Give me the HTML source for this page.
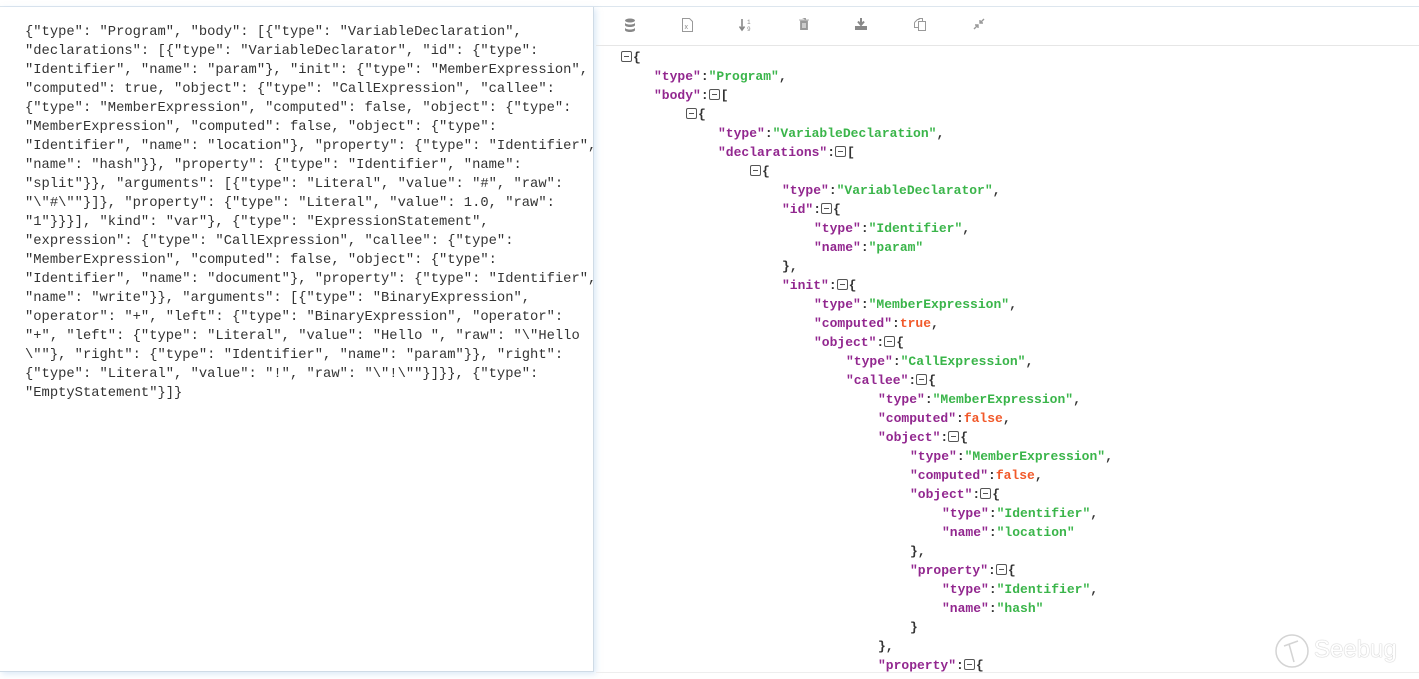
<!DOCTYPE html>
<html><head><meta charset="utf-8"><style>
body{margin:0;width:1419px;height:679px;background:#fff;position:relative;overflow:hidden;font-family:"Liberation Mono","DejaVu Sans Mono",monospace}
.topline{position:absolute;left:0;top:6px;width:1419px;height:1px;background:#dde6ee}
.left{position:absolute;left:0;top:7px;width:593px;height:664px;border-right:1px solid #cfdbe6;border-bottom:1px solid #cfdbe6;box-shadow:2px 2px 6px rgba(150,190,230,.35)}
.left pre{margin:0;position:absolute;left:25px;top:16px;font-family:"Liberation Mono",monospace;font-size:13.8px;line-height:19px;color:#333}
.tb{position:absolute;left:596px;top:7px;width:823px;height:38px;border-bottom:1px solid #e6e6e6}
.tb svg{position:absolute;top:11px}
.tree{position:absolute;left:0;top:0}
.l{position:absolute;font-size:13px;font-weight:bold;line-height:19px;white-space:pre;color:#333}
.k{color:#92278f}.s{color:#3ab54a}.b{color:#f1592a}
.c{display:inline-block;width:9px;height:9px;border:1px solid #555;border-radius:2px;position:relative;vertical-align:-1px;margin-right:1px}
.c:after{content:"";position:absolute;left:2px;right:2px;top:4px;height:1px;background:#555}
.bot{position:absolute;left:596px;top:672px;width:823px;height:1px;background:#eee}
.wm{position:absolute;color:#fff;font-family:"Liberation Sans",sans-serif;font-size:24px;text-shadow:0 0 1px #bbb,0 0 1px #bbb}
</style></head><body>
<div class="topline"></div>
<div class="left"><pre>{"type": "Program", "body": [{"type": "VariableDeclaration",
"declarations": [{"type": "VariableDeclarator", "id": {"type":
"Identifier", "name": "param"}, "init": {"type": "MemberExpression",
"computed": true, "object": {"type": "CallExpression", "callee":
{"type": "MemberExpression", "computed": false, "object": {"type":
"MemberExpression", "computed": false, "object": {"type":
"Identifier", "name": "location"}, "property": {"type": "Identifier",
"name": "hash"}}, "property": {"type": "Identifier", "name":
"split"}}, "arguments": [{"type": "Literal", "value": "#", "raw":
"\"#\""}]}, "property": {"type": "Literal", "value": 1.0, "raw":
"1"}}}], "kind": "var"}, {"type": "ExpressionStatement",
"expression": {"type": "CallExpression", "callee": {"type":
"MemberExpression", "computed": false, "object": {"type":
"Identifier", "name": "document"}, "property": {"type": "Identifier",
"name": "write"}}, "arguments": [{"type": "BinaryExpression",
"operator": "+", "left": {"type": "BinaryExpression", "operator":
"+", "left": {"type": "Literal", "value": "Hello ", "raw": "\"Hello
\""}, "right": {"type": "Identifier", "name": "param"}}, "right":
{"type": "Literal", "value": "!", "raw": "\"!\""}]}}, {"type":
"EmptyStatement"}]}</pre></div>
<div class="tb">
<svg style="left:28px" width="12" height="14" viewBox="0 0 12 14"><g fill="#888"><ellipse cx="6" cy="2.5" rx="5" ry="2"/><path d="M1 4.5c0 1.2 2.2 2 5 2s5-.8 5-2V7c0 1.2-2.2 2-5 2S1 8.2 1 7z"/><path d="M1 9.5c0 1.2 2.2 2 5 2s5-.8 5-2V12c0 1.2-2.2 2-5 2S1 13.2 1 12z"/></g></svg>
<svg style="left:86px" width="11" height="14" viewBox="0 0 11 14"><path d="M.5.5h7l3 3v10H.5z" fill="none" stroke="#999"/><text x="2.5" y="11" font-size="7" fill="#888" font-family="Liberation Sans">x</text></svg>
<svg style="left:143px" width="13" height="14" viewBox="0 0 13 14"><path d="M3 1v10M0.5 8.5L3 12l2.5-3.5" stroke="#888" stroke-width="1.6" fill="none"/><text x="8" y="6" font-size="6" fill="#888">1</text><text x="8" y="13" font-size="6" fill="#888">9</text></svg>
<svg style="left:203px" width="10" height="12" viewBox="0 0 10 12"><path d="M0 2h10M3.5 0h3v2M1.5 3h7v9h-7z" fill="#999" stroke="#999" stroke-width=".8"/><path d="M4 5v5M6 5v5" stroke="#fff"/></svg>
<svg style="left:259px" width="12" height="12" viewBox="0 0 12 12"><path d="M6 0v6M3 3.5L6 7l3-3.5" stroke="#888" stroke-width="2" fill="none"/><path d="M0 8h12v4H0z" fill="#888"/></svg>
<svg style="left:318px" width="12" height="13" viewBox="0 0 12 13"><path d="M4.5.5h4v3M.5 4.5l3-3h2M.5 4.5v5h4M4.5 3.5h7v9h-7z" fill="none" stroke="#999"/></svg>
<svg style="left:377px" width="12" height="12" viewBox="0 0 12 12"><path d="M11 1L7 5M7 2v3h3M1 11l4-4M2 7h3v3" stroke="#999" stroke-width="1.4" fill="none"/></svg>
</div>
<div class="tree">
<div class="l" style="left:621px;top:48px"><span class="c"></span>{</div>
<div class="l" style="left:654px;top:67px"><span class="k">"type"</span>:<span class="s">"Program"</span>,</div>
<div class="l" style="left:654px;top:86px"><span class="k">"body"</span>:<span class="c"></span>[</div>
<div class="l" style="left:686px;top:105px"><span class="c"></span>{</div>
<div class="l" style="left:718px;top:124px"><span class="k">"type"</span>:<span class="s">"VariableDeclaration"</span>,</div>
<div class="l" style="left:718px;top:143px"><span class="k">"declarations"</span>:<span class="c"></span>[</div>
<div class="l" style="left:750px;top:162px"><span class="c"></span>{</div>
<div class="l" style="left:782px;top:181px"><span class="k">"type"</span>:<span class="s">"VariableDeclarator"</span>,</div>
<div class="l" style="left:782px;top:200px"><span class="k">"id"</span>:<span class="c"></span>{</div>
<div class="l" style="left:814px;top:219px"><span class="k">"type"</span>:<span class="s">"Identifier"</span>,</div>
<div class="l" style="left:814px;top:238px"><span class="k">"name"</span>:<span class="s">"param"</span></div>
<div class="l" style="left:782px;top:257px">},</div>
<div class="l" style="left:782px;top:276px"><span class="k">"init"</span>:<span class="c"></span>{</div>
<div class="l" style="left:814px;top:295px"><span class="k">"type"</span>:<span class="s">"MemberExpression"</span>,</div>
<div class="l" style="left:814px;top:314px"><span class="k">"computed"</span>:<span class="b">true</span>,</div>
<div class="l" style="left:814px;top:333px"><span class="k">"object"</span>:<span class="c"></span>{</div>
<div class="l" style="left:846px;top:352px"><span class="k">"type"</span>:<span class="s">"CallExpression"</span>,</div>
<div class="l" style="left:846px;top:371px"><span class="k">"callee"</span>:<span class="c"></span>{</div>
<div class="l" style="left:878px;top:390px"><span class="k">"type"</span>:<span class="s">"MemberExpression"</span>,</div>
<div class="l" style="left:878px;top:409px"><span class="k">"computed"</span>:<span class="b">false</span>,</div>
<div class="l" style="left:878px;top:428px"><span class="k">"object"</span>:<span class="c"></span>{</div>
<div class="l" style="left:910px;top:447px"><span class="k">"type"</span>:<span class="s">"MemberExpression"</span>,</div>
<div class="l" style="left:910px;top:466px"><span class="k">"computed"</span>:<span class="b">false</span>,</div>
<div class="l" style="left:910px;top:485px"><span class="k">"object"</span>:<span class="c"></span>{</div>
<div class="l" style="left:942px;top:504px"><span class="k">"type"</span>:<span class="s">"Identifier"</span>,</div>
<div class="l" style="left:942px;top:523px"><span class="k">"name"</span>:<span class="s">"location"</span></div>
<div class="l" style="left:910px;top:542px">},</div>
<div class="l" style="left:910px;top:561px"><span class="k">"property"</span>:<span class="c"></span>{</div>
<div class="l" style="left:942px;top:580px"><span class="k">"type"</span>:<span class="s">"Identifier"</span>,</div>
<div class="l" style="left:942px;top:599px"><span class="k">"name"</span>:<span class="s">"hash"</span></div>
<div class="l" style="left:910px;top:618px">}</div>
<div class="l" style="left:878px;top:637px">},</div>
<div class="l" style="left:878px;top:656px"><span class="k">"property"</span>:<span class="c"></span>{</div>
</div>
<div class="bot"></div>
<svg style="position:absolute;left:1274px;top:633px" width="38" height="40" viewBox="0 0 38 40"><circle cx="18" cy="18" r="16" fill="none" stroke="#d4d4d4" stroke-width="1.5"/><path d="M10 13l14-5M15 11l5 18" stroke="#d4d4d4" stroke-width="1.5" fill="none"/></svg>
<div class="wm" style="left:1314px;top:636px">Seebug</div>
</body></html>
